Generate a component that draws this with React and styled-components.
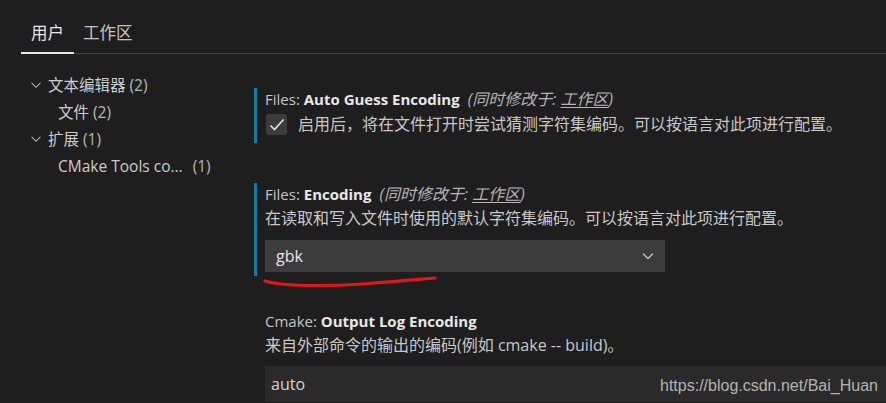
import styled, { createGlobalStyle } from 'styled-components'

const Global = createGlobalStyle`
  html, body {
    margin: 0;
    padding: 0;
    background: #1e1e1e;
  }
  body {
    font-family: "Open Sans", "Noto Sans CJK SC", sans-serif;
    color: #cccccc;
    overflow: hidden;
  }
`

const Page = styled.div`
  position: relative;
  width: 886px;
  height: 403px;
  overflow: hidden;
  background: #1e1e1e;
`

const TabBar = styled.div`
  display: flex;
  margin: 20px 0 0 21px;
  height: 33px;
  border-bottom: 1px solid #464646;
`

const Tab = styled.div`
  padding: 0 10px 0 ${p => (p.active ? '10px' : '9px')};
  font-size: 16.5px;
  line-height: 26px;
  color: ${p => (p.active ? '#e7e7e7' : '#c4c4c4')};
  border-bottom: ${p => (p.active ? '2px solid #e7e7e7' : '2px solid transparent')};
  margin-bottom: -2px;
  box-sizing: border-box;
  height: 34px;
`

const Body = styled.div`
  display: flex;
`

const Tree = styled.div`
  width: 254px;
  padding: 17px 0 0 30px;
  box-sizing: border-box;
  flex-shrink: 0;
`

const TreeRow = styled.div`
  display: flex;
  align-items: center;
  height: 27px;
  padding-left: ${p => (p.child ? '28px' : '0')};
  font-size: 15.5px;
  color: #cccccc;
  white-space: nowrap;
`

const Chevron = styled.svg`
  width: 12px;
  height: 12px;
  margin-right: 6px;
  flex-shrink: 0;
`

const Count = styled.span`
  margin-left: ${p => p.gap || '4px'};
  color: #b8b8b8;
`

const Settings = styled.div`
  display: flex;
  flex-direction: column;
  padding-top: 34px;
  flex: 1;
`

const Setting = styled.div`
  border-left: 3px solid ${p => (p.modified ? '#0b7fa8' : 'transparent')};
  padding: 0 0 ${p => p.pb || '0'} 8px;
  margin-bottom: ${p => p.mb || '0'};
`

const Title = styled.div`
  font-size: 15px;
  line-height: 23px;
  color: #c5c5c5;
  white-space: nowrap;
  b {
    color: #e7e7e7;
    font-weight: 700;
  }
`

const Scope = styled.span`
  font-style: italic;
  font-size: 16px;
  color: #b4b4b4;
  margin-left: 8px;
  u {
    text-underline-offset: 2px;
  }
`

const Desc = styled.div`
  font-size: 16px;
  line-height: 25px;
  color: #c8c8c8;
  white-space: nowrap;
`

const CheckRow = styled.div`
  display: flex;
  align-items: center;
  gap: 11px;
  margin-top: 1px;
`

const CheckBox = styled.div`
  width: 21px;
  height: 21px;
  border-radius: 3px;
  background: #3c3c3c;
  display: flex;
  align-items: center;
  justify-content: center;
  margin-left: 1px;
`

const Select = styled.div`
  display: flex;
  align-items: center;
  justify-content: space-between;
  width: 400px;
  height: 32px;
  margin-top: 9px;
  padding: 0 10px 0 11px;
  box-sizing: border-box;
  background: #3c3c3c;
  font-size: 16px;
  color: #e7e7e7;
`

const Input = styled.div`
  height: 36px;
  margin-top: 8px;
  padding-left: 6px;
  display: flex;
  align-items: center;
  background: #2a2a2a;
  font-size: 16px;
  color: #d4d4d4;
`

const RedMark = styled.svg`
  position: absolute;
  left: 262px;
  top: 273px;
  width: 180px;
  height: 18px;
  pointer-events: none;
`

const Watermark = styled.div`
  position: absolute;
  left: 660px;
  top: 377px;
  font-family: "Liberation Sans", Arial, sans-serif;
  font-size: 16px;
  color: #b3b3b3;
`

const Down = () => (
  <Chevron viewBox="0 0 16 16">
    <path d="M2 5l6 6 6-6" fill="none" stroke="#c5c5c5" strokeWidth="1.4" />
  </Chevron>
)

function App() {
  return (
    <Page>
      <Global />
      <TabBar>
        <Tab active>用户</Tab>
        <Tab>工作区</Tab>
      </TabBar>
      <Body>
        <Tree>
          <TreeRow><Down />文本编辑器<Count>(2)</Count></TreeRow>
          <TreeRow child>文件<Count>(2)</Count></TreeRow>
          <TreeRow><Down />扩展<Count>(1)</Count></TreeRow>
          <TreeRow child>CMake Tools co...<Count gap="10px">(1)</Count></TreeRow>
        </Tree>
        <Settings>
          <Setting modified pb="6px" mb="40px">
            <Title>Files: <b>Auto Guess Encoding</b><Scope>(同时修改于: <u>工作区</u>)</Scope></Title>
            <CheckRow>
              <CheckBox>
                <svg width="16" height="16" viewBox="0 0 16 16">
                  <path d="M1.5 8.5l4 4 9-10" fill="none" stroke="#e5e5e5" strokeWidth="1.6" />
                </svg>
              </CheckBox>
              <Desc>启用后，将在文件打开时尝试猜测字符集编码。可以按语言对此项进行配置。</Desc>
            </CheckRow>
          </Setting>
          <Setting modified pb="4px" mb="34px">
            <Title>Files: <b>Encoding</b><Scope>(同时修改于: <u>工作区</u>)</Scope></Title>
            <Desc>在读取和写入文件时使用的默认字符集编码。可以按语言对此项进行配置。</Desc>
            <Select>
              gbk
              <svg width="14" height="14" viewBox="0 0 16 16">
                <path d="M2.5 5.5l5.5 5.5 5.5-5.5" fill="none" stroke="#d0d0d0" strokeWidth="1.5" />
              </svg>
            </Select>
          </Setting>
          <Setting>
            <Title>Cmake: <b>Output Log Encoding</b></Title>
            <Desc>来自外部命令的输出的编码(例如 cmake -- build)。</Desc>
            <Input>auto</Input>
          </Setting>
        </Settings>
      </Body>
      <RedMark viewBox="0 0 180 18">
        <path d="M3 8 C20 13, 60 14, 100 11 S160 6, 173 5" fill="none" stroke="#e0161c" strokeWidth="3.2" strokeLinecap="round" />
      </RedMark>
      <Watermark>https://blog.csdn.net/Bai_Huan</Watermark>
    </Page>
  )
}

export default App
